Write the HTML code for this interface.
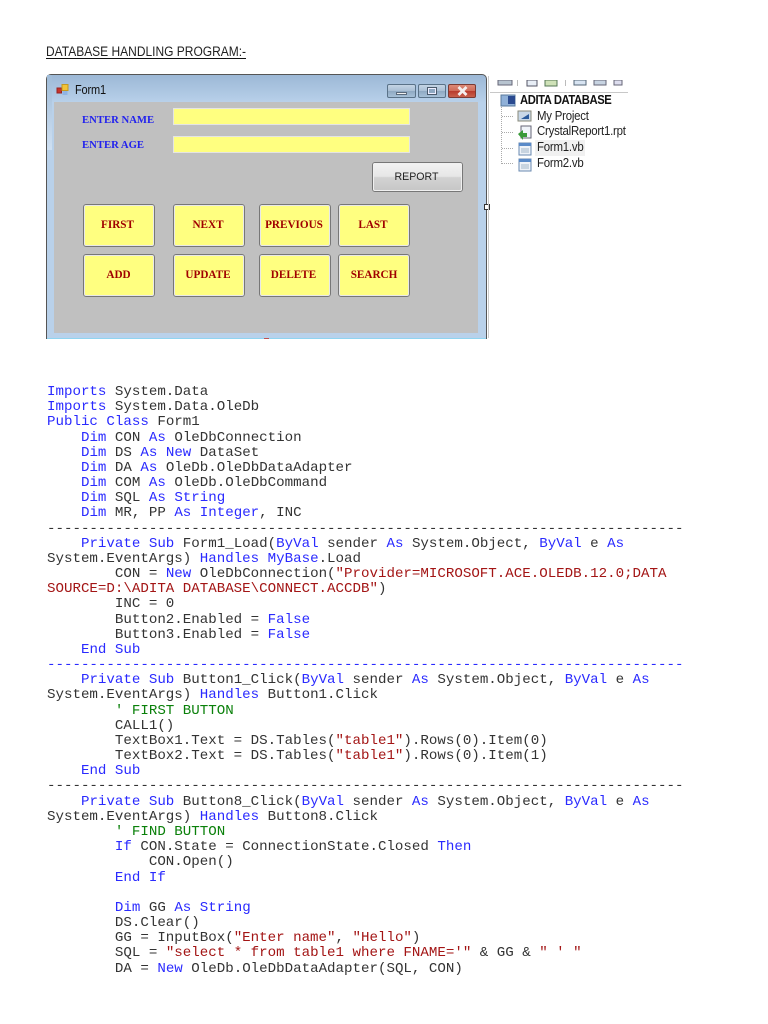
<!DOCTYPE html>
<html><head><meta charset="utf-8">
<style>
html,body{margin:0;padding:0;background:#fff;width:768px;height:1024px;overflow:hidden}
body{position:relative;color:#222}
.a{position:absolute}
pre{position:absolute;left:47px;top:385px;margin:0;font:14.15px/15.17px "Liberation Mono",monospace;color:#333;filter:blur(.35px);white-space:pre}
b{font-weight:normal;color:#2a2aff}
i{font-style:normal;color:#a31515}
u{text-decoration:none;color:#0a800a}
.btn{position:absolute;box-sizing:border-box;height:43px;background:#ffff80;border:2px solid #e8e8e8;outline:1px solid #777;outline-offset:-1px;border-radius:3px;font:bold 11.2px/39px "Liberation Serif",serif;color:#a00000;text-align:center;filter:blur(.3px)}
.tb{position:absolute;left:173px;width:237px;height:17px;box-sizing:border-box;background:#ffff80;border:1px solid #e4e4e4}
.lb{position:absolute;left:82px;font:bold 10.7px/14px "Liberation Serif",serif;color:#2222ee;filter:blur(.25px);white-space:nowrap}
.tr{position:absolute;left:537px;font:12.5px/15px "Liberation Sans",sans-serif;color:#222;letter-spacing:-.25px;filter:blur(.2px);transform:scaleX(.915);transform-origin:left;white-space:nowrap}
</style></head><body>

<div class="a" style="left:46px;top:43px;font:13.5px/18px 'Liberation Sans',sans-serif;color:#222;white-space:nowrap;filter:blur(.2px);transform:scaleX(.888);transform-origin:left">DATABASE HANDLING PROGRAM:-</div>
<div class="a" style="left:46px;top:58px;width:200px;height:1px;background:#111"></div>

<!-- window -->
<div class="a" style="left:46px;top:74px;width:441px;height:265px;box-sizing:border-box;border:1px solid #555;border-bottom:none;border-radius:5px 5px 0 0;background:linear-gradient(#9cb8d6 0,#b9d1ea 28px,#b9d1ea 100%);overflow:hidden">
<div class="a" style="left:7px;top:27px;width:424px;height:231px;background:#c0c0c0"></div>
<div class="a" style="left:0;bottom:0;width:439px;height:1px;background:#8fd4f0"></div>
</div>
<div class="a" style="left:47px;top:75px;width:5px;height:75px;background:linear-gradient(#a0bcd8,#cfe0f2)"></div>

<!-- title icon -->
<svg class="a" style="left:56px;top:83px" width="14" height="14" viewBox="0 0 14 14">
<rect x="1" y="5" width="4.5" height="5" fill="#c8342c" stroke="#922"/>
<rect x="6" y="1.5" width="6" height="6" fill="#f2c338" stroke="#c49a20"/>
<rect x="6.5" y="8" width="5" height="4" fill="#8fb4e4"/>
</svg>
<div class="a" style="left:75px;top:83px;font:12.5px/15px 'Liberation Sans',sans-serif;color:#111;letter-spacing:-.2px;filter:blur(.2px);transform:scaleX(.88);transform-origin:left">Form1</div>

<!-- caption buttons -->
<div class="a" style="left:387px;top:84px;width:29px;height:14px;box-sizing:border-box;border:1px solid #5a7288;border-radius:2px;background:linear-gradient(#c4d4e4 0,#a9bed4 50%,#8ea8c2 51%,#a6c0d8 100%)"></div>
<div class="a" style="left:396px;top:92px;width:11px;height:3px;background:#f0f0f0;border:1px solid #5a6a7c;box-sizing:border-box"></div>
<div class="a" style="left:418px;top:84px;width:28px;height:14px;box-sizing:border-box;border:1px solid #5a7288;border-radius:2px;background:linear-gradient(#c4d4e4 0,#a9bed4 50%,#8ea8c2 51%,#a6c0d8 100%)"></div>
<div class="a" style="left:427px;top:87px;width:10px;height:8px;box-sizing:border-box;border:2px solid #eef;outline:1px solid #4a5a6c;outline-offset:-1px;background:#8ea8c2"></div>
<div class="a" style="left:448px;top:84px;width:28px;height:14px;box-sizing:border-box;border:1px solid #7a3a34;border-radius:2px;background:linear-gradient(#dc8a78 0,#cf6a58 50%,#b83a2c 51%,#c8604c 100%)"></div>
<svg class="a" style="left:456px;top:85px" width="13" height="12" viewBox="0 0 13 12"><path d="M2.5 2 L10.5 10 M10.5 2 L2.5 10" stroke="#f4eeee" stroke-width="2.8"/></svg>

<!-- fields -->
<div class="tb" style="top:108px"></div>
<div class="tb" style="top:136px"></div>
<div class="lb" style="top:113px">ENTER NAME</div>
<div class="lb" style="top:138px">ENTER AGE</div>

<!-- report -->
<div class="a" style="left:372px;top:162px;width:91px;height:30px;box-sizing:border-box;border:1px solid #777;outline:1px solid #f0f0f0;outline-offset:-2px;border-radius:3px;background:linear-gradient(#f2f2f2 0,#e6e6e6 48%,#d2d2d2 52%,#c6c6c6 100%);font:10.6px/29px 'Liberation Sans',sans-serif;color:#222;text-align:center;padding-right:2px;filter:blur(.2px)">REPORT</div>

<!-- buttons -->
<div class="btn" style="left:83px;top:204px;width:72px;padding-right:3px">FIRST</div>
<div class="btn" style="left:173px;top:204px;width:72px;padding-right:2px">NEXT</div>
<div class="btn" style="left:259px;top:204px;width:72px;padding-right:2px">PREVIOUS</div>
<div class="btn" style="left:338px;top:204px;width:72px;padding-right:2px">LAST</div>
<div class="btn" style="left:83px;top:254px;width:72px;padding-right:1px">ADD</div>
<div class="btn" style="left:173px;top:254px;width:72px;padding-right:2px">UPDATE</div>
<div class="btn" style="left:259px;top:254px;width:72px;padding-right:3px">DELETE</div>
<div class="btn" style="left:338px;top:254px;width:72px">SEARCH</div>

<!-- resize handles / edge -->
<div class="a" style="left:484px;top:204px;width:6px;height:6px;box-sizing:border-box;border:1px solid #333;background:#fff"></div>
<div class="a" style="left:264px;top:338px;width:5px;height:1px;background:#c05050"></div>
<div class="a" style="left:488px;top:76px;width:1px;height:262px;background:#ccc"></div>

<!-- solution explorer -->
<svg class="a" style="left:490px;top:80px" width="138" height="14" viewBox="0 0 138 14">
<rect x="8" y="0" width="14" height="5" fill="#b8c4d0" stroke="#667"/>
<rect x="27" y="0" width="1" height="6" fill="#bbb"/>
<rect x="37" y="0" width="10" height="6" fill="#e8eef6" stroke="#556"/>
<rect x="55" y="0" width="12" height="6" fill="#cfe2b8" stroke="#575"/>
<rect x="75" y="0" width="1" height="6" fill="#bbb"/>
<rect x="84" y="0" width="12" height="5" fill="#d8e4f2" stroke="#567"/>
<rect x="104" y="0" width="12" height="5" fill="#c8d4e2" stroke="#667"/>
<rect x="124" y="0" width="8" height="5" fill="#dde" stroke="#667"/>
<rect x="0" y="12" width="138" height="1" fill="#c8c8c8"/>
</svg>
<svg class="a" style="left:500px;top:94px" width="40" height="78" viewBox="0 0 40 78">
<path d="M1.5 11V70 M2 22.500H14 M2 38.500H14 M2 54.500H14 M2 69.500H14" stroke="#aaa" stroke-dasharray="1 1" fill="none"/>
<rect x="1" y="1" width="14" height="11" fill="#8fb0d8" stroke="#5a7a9c"/>
<rect x="8" y="2" width="7" height="8" fill="#2a4a90"/>
<rect x="18" y="17" width="13" height="10" fill="#c8d8e8" stroke="#8a8a7a"/>
<path d="M21 25 L29 20 V25Z" fill="#2a5a9c"/>
<rect x="21" y="32" width="10" height="12" fill="#f0f4fa" stroke="#667"/>
<path d="M18 40 L23 36 V39 H27 V43 H23 V46Z" fill="#3a9a3a"/>
<rect x="19" y="49" width="12" height="12" fill="#eef2f8" stroke="#6a8ab0"/>
<rect x="19" y="49" width="12" height="3" fill="#5a8ac8"/>
<rect x="21" y="54" width="8" height="5" fill="#c8d4e0"/>
<rect x="19" y="65" width="12" height="12" fill="#eef2f8" stroke="#6a8ab0"/>
<rect x="19" y="65" width="12" height="3" fill="#5a8ac8"/>
<rect x="21" y="70" width="8" height="5" fill="#c8d4e0"/>
</svg>
<div class="a" style="left:535px;top:140px;width:50px;height:16px;background:#f1f1f1"></div>
<div class="a" style="left:520px;top:93px;font:bold 12.5px/15px 'Liberation Sans',sans-serif;color:#111;letter-spacing:-.45px;white-space:nowrap;filter:blur(.2px);transform:scaleX(.9);transform-origin:left">ADITA DATABASE</div>
<div class="tr" style="top:109px">My Project</div>
<div class="tr" style="top:124px">CrystalReport1.rpt</div>
<div class="tr" style="top:140px">Form1.vb</div>
<div class="tr" style="top:156px">Form2.vb</div>

<pre><b>Imports</b> System.Data
<b>Imports</b> System.Data.OleDb
<b>Public Class</b> Form1
    <b>Dim</b> CON <b>As</b> OleDbConnection
    <b>Dim</b> DS <b>As New</b> DataSet
    <b>Dim</b> DA <b>As</b> OleDb.OleDbDataAdapter
    <b>Dim</b> COM <b>As</b> OleDb.OleDbCommand
    <b>Dim</b> SQL <b>As String</b>
    <b>Dim</b> MR, PP <b>As Integer</b>, INC
---------------------------------------------------------------------------
    <b>Private Sub</b> Form1_Load(<b>ByVal</b> sender <b>As</b> System.Object, <b>ByVal</b> e <b>As</b>
System.EventArgs) <b>Handles MyBase</b>.Load
        CON = <b>New</b> OleDbConnection(<i>"Provider=MICROSOFT.ACE.OLEDB.12.0;DATA</i>
<i>SOURCE=D:\ADITA DATABASE\CONNECT.ACCDB"</i>)
        INC = 0
        Button2.Enabled = <b>False</b>
        Button3.Enabled = <b>False</b>
    <b>End Sub</b>
<b>---------------------------------------------------------------------------</b>
    <b>Private Sub</b> Button1_Click(<b>ByVal</b> sender <b>As</b> System.Object, <b>ByVal</b> e <b>As</b>
System.EventArgs) <b>Handles</b> Button1.Click
        <u>' FIRST BUTTON</u>
        CALL1()
        TextBox1.Text = DS.Tables(<i>"table1"</i>).Rows(0).Item(0)
        TextBox2.Text = DS.Tables(<i>"table1"</i>).Rows(0).Item(1)
    <b>End Sub</b>
---------------------------------------------------------------------------
    <b>Private Sub</b> Button8_Click(<b>ByVal</b> sender <b>As</b> System.Object, <b>ByVal</b> e <b>As</b>
System.EventArgs) <b>Handles</b> Button8.Click
        <u>' FIND BUTTON</u>
        <b>If</b> CON.State = ConnectionState.Closed <b>Then</b>
            CON.Open()
        <b>End If</b>

        <b>Dim</b> GG <b>As String</b>
        DS.Clear()
        GG = InputBox(<i>"Enter name"</i>, <i>"Hello"</i>)
        SQL = <i>"select * from table1 where FNAME='"</i> &amp; GG &amp; <i>" ' "</i>
        DA = <b>New</b> OleDb.OleDbDataAdapter(SQL, CON)</pre>
</body></html>
